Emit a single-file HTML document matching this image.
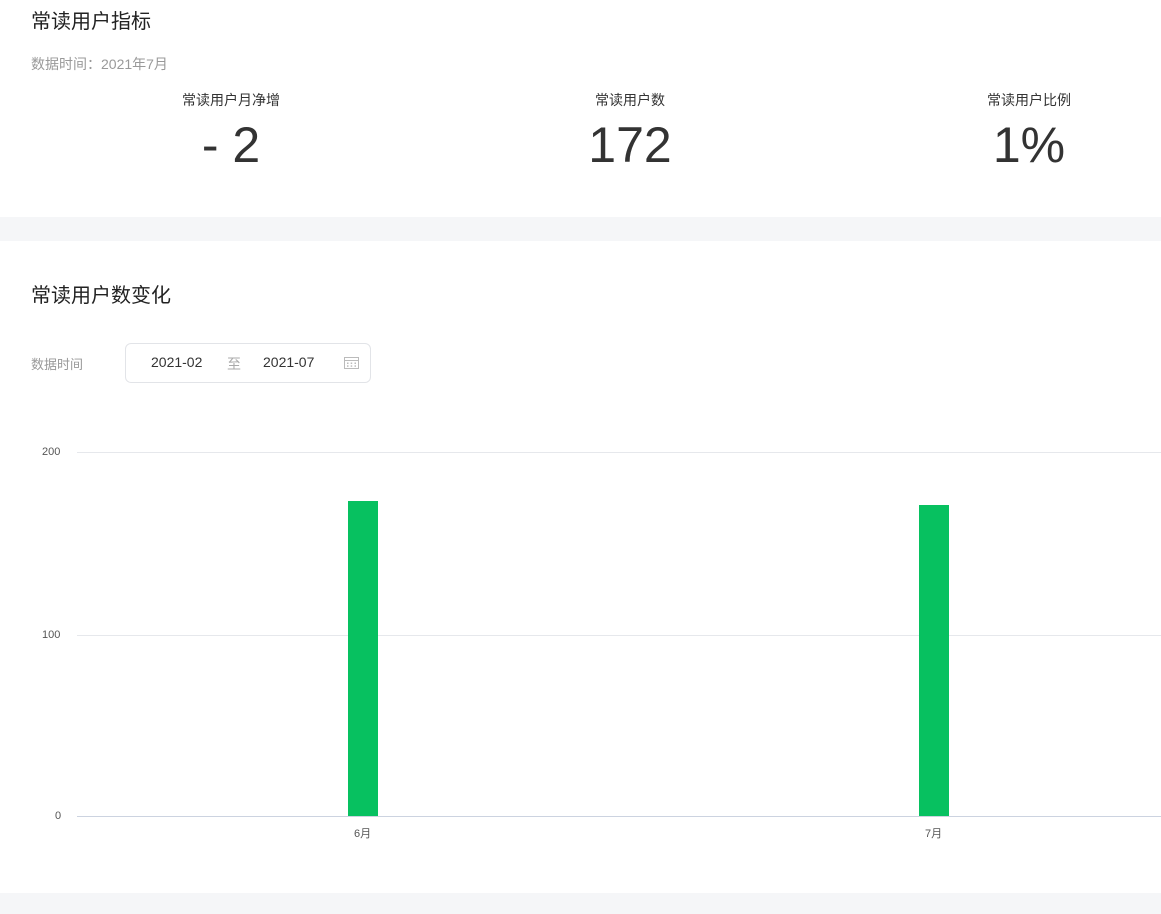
<!DOCTYPE html>
<html><head><meta charset="utf-8"><style>
body{margin:0;width:1161px;height:914px;background:#fff;font-family:"Liberation Sans","Noto Sans CJK SC",sans-serif;position:relative;overflow:hidden;color:#222}
.a{position:absolute;white-space:nowrap}
.band{position:absolute;left:0;width:1161px;background:#f5f6f8}
.lbl{font-size:14px;color:#333;transform:translateX(-50%)}
.num{font-size:50px;color:#333;transform:translateX(-50%);line-height:1}
.grid{position:absolute;left:77px;width:1084px;height:1px;background:#e6e8ec}
.ax{font-size:11px;color:#555}
</style></head><body>
<div class="a" style="left:31px;top:5px;font-size:20px;color:#222">常读用户指标</div>
<div class="a" style="left:31px;top:54px;font-size:14px;color:#999">数据时间：2021年7月</div>
<div class="a lbl" style="left:231px;top:90px">常读用户月净增</div>
<div class="a lbl" style="left:630px;top:90px">常读用户数</div>
<div class="a lbl" style="left:1029px;top:90px">常读用户比例</div>
<div class="a num" style="left:231px;top:120px">- 2</div>
<div class="a num" style="left:630px;top:120px">172</div>
<div class="a num" style="left:1029px;top:120px">1%</div>
<div class="band" style="top:217px;height:24px"></div>
<div class="a" style="left:31px;top:279px;font-size:20px;color:#222">常读用户数变化</div>
<div class="a" style="left:31px;top:354px;font-size:13px;color:#999">数据时间</div>
<div class="a" style="left:125px;top:343px;width:244px;height:38px;border:1px solid #e2e4e8;border-radius:6px"></div>
<div class="a" style="left:151px;top:354px;font-size:14px;color:#333">2021-02</div>
<div class="a" style="left:227px;top:354px;font-size:14px;color:#aaa">至</div>
<div class="a" style="left:263px;top:354px;font-size:14px;color:#333">2021-07</div>
<svg class="a" style="left:344px;top:356px" width="15" height="13" viewBox="0 0 15 13"><rect x="0.5" y="1.5" width="14" height="11" fill="none" stroke="#bbb"/><line x1="0.5" y1="4.5" x2="14.5" y2="4.5" stroke="#bbb"/><g fill="#bbb"><rect x="3" y="6.5" width="1.5" height="1.5"/><rect x="6.7" y="6.5" width="1.5" height="1.5"/><rect x="10.5" y="6.5" width="1.5" height="1.5"/><rect x="3" y="9.3" width="1.5" height="1.5"/><rect x="6.7" y="9.3" width="1.5" height="1.5"/><rect x="10.5" y="9.3" width="1.5" height="1.5"/></g></svg>
<div class="grid" style="top:452px"></div>
<div class="grid" style="top:635px"></div>
<div class="grid" style="top:816px;background:#ccd3e0"></div>
<div class="a ax" style="left:42px;top:446px">200</div>
<div class="a ax" style="left:42px;top:629px">100</div>
<div class="a ax" style="left:55px;top:810px">0</div>
<div class="a" style="left:348px;top:501px;width:30px;height:315px;background:#07c160"></div>
<div class="a" style="left:919px;top:505px;width:30px;height:311px;background:#07c160"></div>
<div class="a ax" style="left:354px;top:825px">6月</div>
<div class="a ax" style="left:925px;top:825px">7月</div>
<div class="band" style="top:893px;height:21px"></div>
</body></html>
